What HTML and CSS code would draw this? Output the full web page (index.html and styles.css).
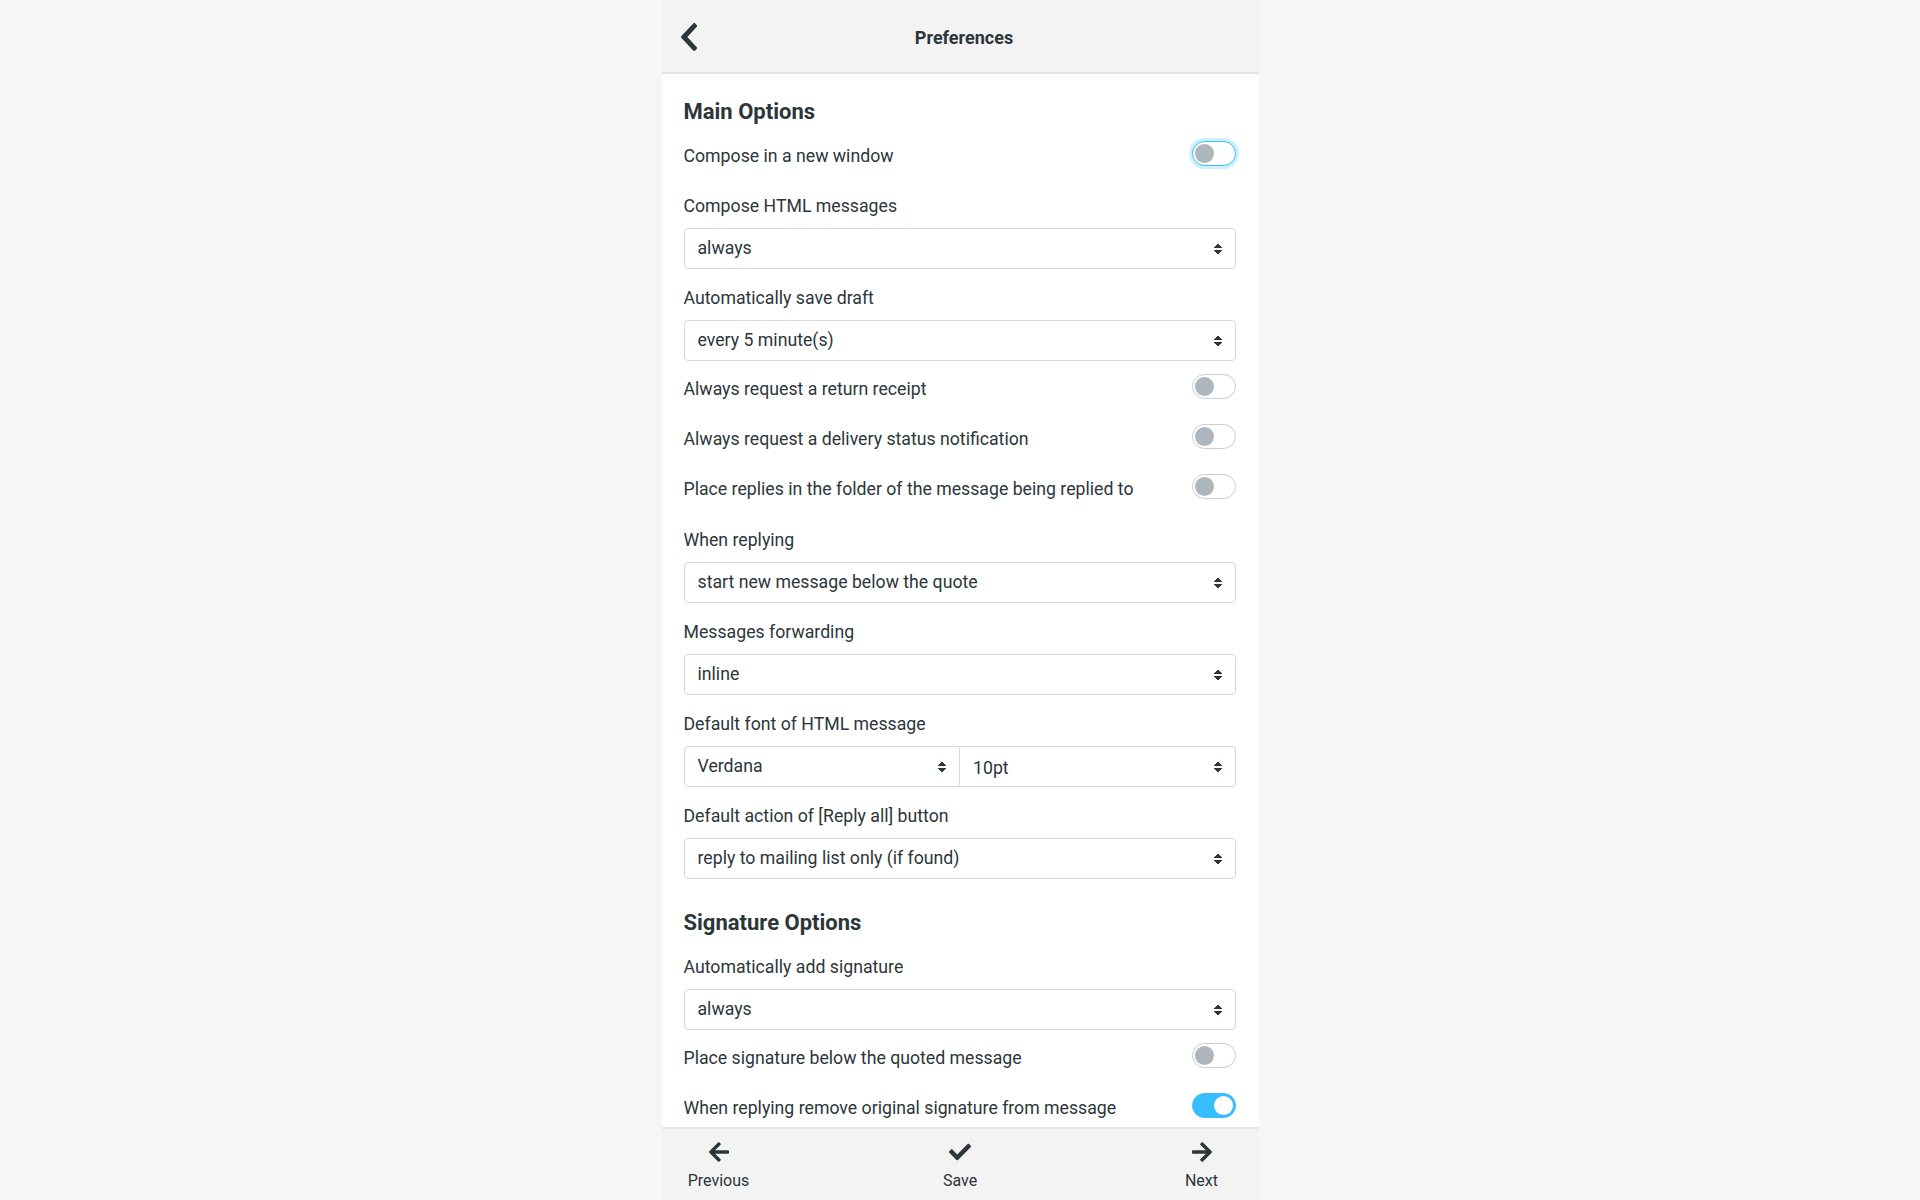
FILE: index.html
```html
<!DOCTYPE html>
<html>
<head>
<meta charset="utf-8">
<title>Preferences</title>
<link rel="stylesheet" href="styles.css">
</head>
<body>
<div class="panel">
  <header class="header">
    <a class="back" href="#">
      <svg width="16" height="28" viewBox="27 37 265 438" preserveAspectRatio="none"><path fill="#2c363a" d="M34.52 239.03L228.87 44.69c9.37-9.37 24.57-9.37 33.94 0l22.67 22.67c9.36 9.360 9.37 24.52.04 33.9L131.49 256l154.02 154.750c9.34 9.38 9.32 24.540-.04 33.9l-22.67 22.67c-9.37 9.37-24.57 9.37-33.94 0L34.520 272.970c-9.37-9.37-9.37-24.570 0-33.940z"/></svg>
    </a>
    <h1 class="title">Preferences</h1>
  </header>
  <main class="content">
    <h2 class="section">Main Options</h2>
    <div class="row"><span class="label">Compose in a new window</span><span class="switch focus"></span></div>
    <div class="group"><div class="label">Compose HTML messages</div><div class="select">always</div></div>
    <div class="group"><div class="label">Automatically save draft</div><div class="select">every 5 minute(s)</div></div>
    <div class="row"><span class="label">Always request a return receipt</span><span class="switch"></span></div>
    <div class="row"><span class="label">Always request a delivery status notification</span><span class="switch"></span></div>
    <div class="row"><span class="label">Place replies in the folder of the message being replied to</span><span class="switch"></span></div>
    <div class="group"><div class="label">When replying</div><div class="select">start new message below the quote</div></div>
    <div class="group"><div class="label">Messages forwarding</div><div class="select">inline</div></div>
    <div class="group"><div class="label">Default font of HTML message</div>
      <div class="pair"><div class="select first">Verdana</div><div class="select second">10pt</div></div>
    </div>
    <div class="group"><div class="label">Default action of [Reply all] button</div><div class="select">reply to mailing list only (if found)</div></div>
    <h2 class="section sig">Signature Options</h2>
    <div class="group"><div class="label">Automatically add signature</div><div class="select">always</div></div>
    <div class="row"><span class="label">Place signature below the quoted message</span><span class="switch"></span></div>
    <div class="row"><span class="label">When replying remove original signature from message</span><span class="switch on"></span></div>
  </main>
  <footer class="footer">
    <a class="fbtn" href="#">
      <svg width="20" height="20" viewBox="0 37 448 438"><path fill="#2c363a" d="M257.5 445.1l-22.2 22.2c-9.4 9.4-24.6 9.4-33.9 0L7 273c-9.4-9.4-9.4-24.6 0-33.9L201.4 44.7c9.4-9.4 24.6-9.4 33.9 0l22.2 22.2c9.5 9.5 9.3 25-.4 34.1L136.6 216H424c13.3 0 24 10.7 24 24v32c0 13.3-10.7 24-24 24H136.6l120.5 114.8c9.8 9.1 10 24.6.4 34.1z"/></svg>
      <span>Previous</span>
    </a>
    <a class="fbtn" href="#">
      <svg width="22" height="20" viewBox="0 60 512 392"><path fill="#2c363a" d="M173.898 439.404l-166.4-166.4c-9.997-9.997-9.997-26.206 0-36.204l36.203-36.204c9.997-9.998 26.207-9.998 36.204 0L192 312.69 432.095 72.596c9.997-9.997 26.207-9.997 36.204 0l36.203 36.204c9.997 9.997 9.997 26.206 0 36.204l-294.4 294.401c-9.998 9.997-26.207 9.997-36.204-.001z"/></svg>
      <span>Save</span>
    </a>
    <a class="fbtn" href="#">
      <svg width="20" height="20" viewBox="0 37 448 438"><path fill="#2c363a" d="M190.5 66.9l22.2-22.2c9.4-9.4 24.6-9.4 33.9 0L441 239c9.4 9.4 9.4 24.6 0 33.9L246.6 467.3c-9.4 9.4-24.6 9.4-33.9 0l-22.2-22.2c-9.5-9.5-9.3-25 .4-34.1L311.4 296H24c-13.3 0-24-10.7-24-24v-32c0-13.3 10.7-24 24-24h287.4L190.9 101c-9.8-9.1-10-24.6-.4-34.1z"/></svg>
      <span>Next</span>
    </a>
  </footer>
</div>
</body>
</html>
```
FILE: styles.css
```css
* { box-sizing: border-box; }
html, body { margin: 0; padding: 0; height: 100%; }
body {
  background: #f6f6f6;
  font-family: Roboto, "Liberation Sans", sans-serif;
  color: #2c363a;
  display: flex;
  justify-content: center;
  overflow: hidden;
}
.panel {
  width: 597px;
  height: 1200px;
  background: #fff;
  display: flex;
  flex-direction: column;
}
.header {
  height: 74px;
  flex: none;
  background: #f3f3f3;
  border-bottom: 2px solid #e0e5e8;
  display: flex;
  align-items: center;
  justify-content: center;
  padding: 4px 0 0 8px;
  position: relative;
}
.back {
  position: absolute;
  left: 19px;
  top: 23px;
  display: block;
  line-height: 0;
}
.title {
  margin: 0;
  font-size: 18px;
  font-weight: bold;
  line-height: 22px;
}
.content {
  flex: 1;
  overflow: hidden;
  padding: 0 23px 0 22px;
}
.section {
  margin: 25px 0 5px;
  font-size: 22px;
  font-weight: bold;
  line-height: 26px;
}
.section.sig { margin: 28px 0 5px; }
.label {
  font-size: 17.7px;
  line-height: 24px;
}
.row {
  height: 50px;
  padding-top: 1px;
  display: flex;
  align-items: center;
  justify-content: space-between;
}
.group {
  padding: 13.7px 0 3.3px;
}
.group .label { margin-bottom: 10px; }
.select {
  height: 41px;
  border: 1px solid #d4dbde;
  border-radius: 4px;
  padding: 0 40px 0 13px;
  font-size: 17.7px;
  line-height: 38px;
  position: relative;
}
.select::after {
  content: "";
  position: absolute;
  right: 13px;
  top: 14px;
  width: 8px;
  height: 12px;
  background:
    linear-gradient(to bottom right, transparent 50%, #2c363a 50%) 0 0 / 4px 5px no-repeat,
    linear-gradient(to bottom left, transparent 50%, #2c363a 50%) 4px 0 / 4px 5px no-repeat,
    linear-gradient(to top right, transparent 50%, #2c363a 50%) 0 7px / 4px 5px no-repeat,
    linear-gradient(to top left, transparent 50%, #2c363a 50%) 4px 7px / 4px 5px no-repeat;
}
.pair { display: flex; }
.pair .select { flex: 1; }
.pair .first { border-radius: 4px 0 0 4px; }
.pair .second { border-radius: 0 4px 4px 0; border-left: none; padding-top: 2px; }
.switch {
  flex: none;
  width: 44px;
  height: 25px;
  margin-bottom: 5px;
  border: 1px solid #c8ced2;
  border-radius: 13px;
  background: #fff;
  position: relative;
}
.switch::after {
  content: "";
  position: absolute;
  left: 2px;
  top: 2px;
  width: 19px;
  height: 19px;
  border-radius: 50%;
  background: #adb5bd;
}
.switch.focus {
  border-color: #37beff;
  box-shadow: 0 0 0 3px rgba(55, 190, 255, 0.25);
}
.switch.on {
  background: #37beff;
  border-color: #37beff;
}
.switch.on::after {
  left: auto;
  right: 2px;
  background: #fff;
}
.footer {
  height: 73px;
  flex: none;
  background: #f3f3f3;
  border-top: 2px solid #e0e5e8;
  display: flex;
  justify-content: space-between;
}
.fbtn {
  width: 114px;
  display: flex;
  flex-direction: column;
  align-items: center;
  padding-top: 13px;
  color: #2c363a;
  text-decoration: none;
  font-size: 16px;
  line-height: 18px;
}
.fbtn svg { margin-bottom: 10px; }
```
